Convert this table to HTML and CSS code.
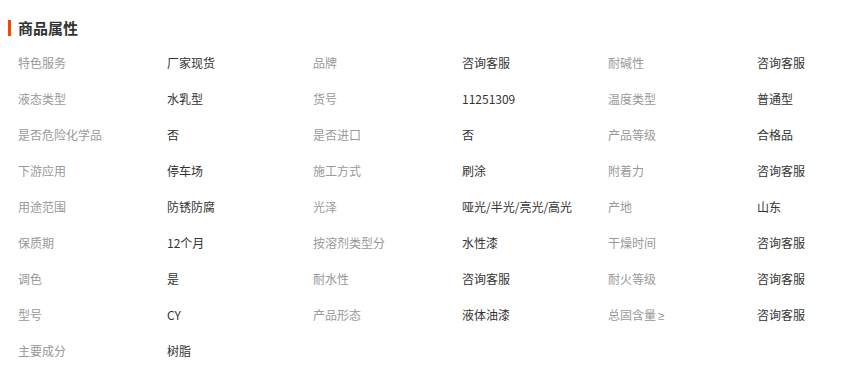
FILE: index.html
```html
<!DOCTYPE html>
<html lang="zh">
<head>
<meta charset="utf-8">
<link rel="stylesheet" href="styles.css">
</head>
<body>
<div class="attrs">
  <h3 class="title">商品属性</h3>
  <div class="grid">
    <span class="k">特色服务</span><span class="v">厂家现货</span>
    <span class="k">品牌</span><span class="v">咨询客服</span>
    <span class="k">耐碱性</span><span class="v">咨询客服</span>
    <span class="k">液态类型</span><span class="v">水乳型</span>
    <span class="k">货号</span><span class="v">11251309</span>
    <span class="k">温度类型</span><span class="v">普通型</span>
    <span class="k">是否危险化学品</span><span class="v">否</span>
    <span class="k">是否进口</span><span class="v">否</span>
    <span class="k">产品等级</span><span class="v">合格品</span>
    <span class="k">下游应用</span><span class="v">停车场</span>
    <span class="k">施工方式</span><span class="v">刷涂</span>
    <span class="k">附着力</span><span class="v">咨询客服</span>
    <span class="k">用途范围</span><span class="v">防锈防腐</span>
    <span class="k">光泽</span><span class="v">哑光/半光/亮光/高光</span>
    <span class="k">产地</span><span class="v">山东</span>
    <span class="k">保质期</span><span class="v">12个月</span>
    <span class="k">按溶剂类型分</span><span class="v">水性漆</span>
    <span class="k">干燥时间</span><span class="v">咨询客服</span>
    <span class="k">调色</span><span class="v">是</span>
    <span class="k">耐水性</span><span class="v">咨询客服</span>
    <span class="k">耐火等级</span><span class="v">咨询客服</span>
    <span class="k">型号</span><span class="v">CY</span>
    <span class="k">产品形态</span><span class="v">液体油漆</span>
    <span class="k">总固含量<span class="sym">≥</span></span><span class="v">咨询客服</span>
    <span class="k">主要成分</span><span class="v">树脂</span>
  </div>
</div>
</body>
</html>
```
FILE: styles.css
```css
html, body {
  margin: 0;
  padding: 0;
  background: #fff;
  overflow: hidden;
}
body {
  font-family: "Noto Sans CJK SC", "Liberation Sans", sans-serif;
  font-size: 12px;
  color: #333;
}
.attrs {
  padding: 20px 0 0 8px;
}
.title {
  margin: 0;
  border-left: 3px solid #ff4400;
  padding-left: 7px;
  font-size: 15px;
  line-height: 16px;
  font-weight: bold;
  color: #333;
}
.grid {
  display: grid;
  grid-template-columns: 149px 146px 149px 146px 149px 96px;
  grid-auto-rows: 36px;
  padding: 18px 0 0 10px;
}
.k, .v {
  line-height: 18px;
  white-space: nowrap;
}
.k {
  color: #999;
}
.v {
  color: #333;
}
.sym {
  font-family: "Liberation Sans", sans-serif;
  margin-left: 2px;
}
```
